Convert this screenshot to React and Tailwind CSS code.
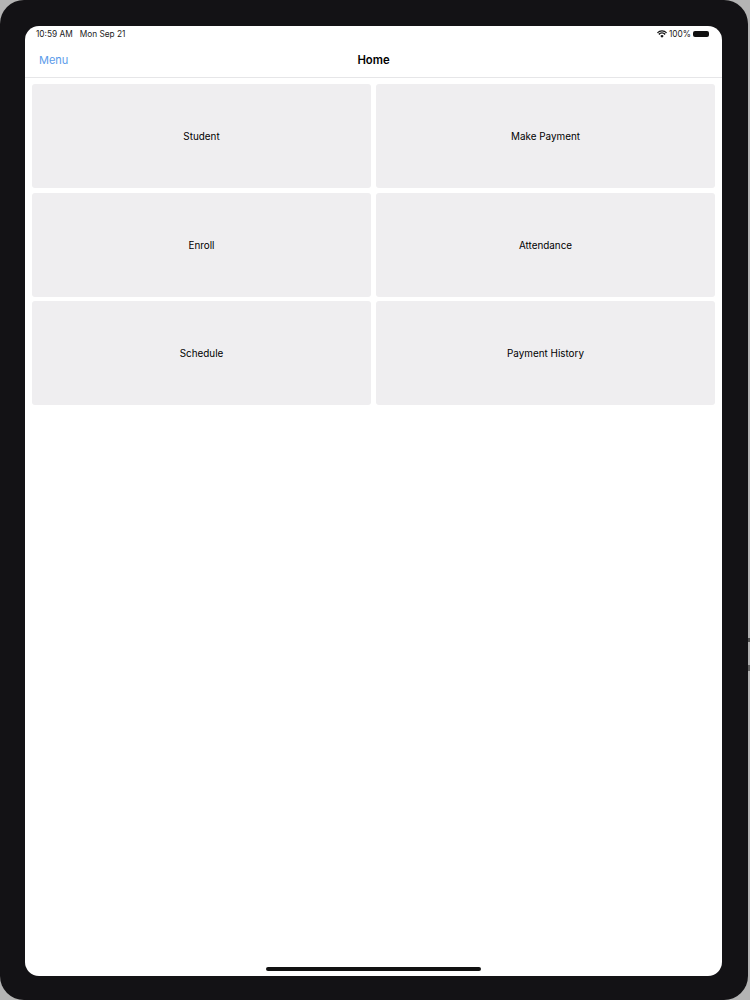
const tiles = ["Student", "Make Payment", "Enroll", "Attendance", "Schedule", "Payment History"];

const WifiIcon = () => (
  <svg className="w-[10px] h-[8px]" viewBox="0 0 20 15" fill="#111">
    <path d="M10 15 6.6 11.4a4.8 4.8 0 0 1 6.8 0L10 15ZM4.6 9.3 2.6 7.2a10.4 10.4 0 0 1 14.8 0l-2 2.1a7.6 7.6 0 0 0-10.800 0ZM1.500 6.100 0 4.400a14 14 0 0 1 20 0l-1.500 1.700a11.800 11.800 0 0 0-17 0Z" />
  </svg>
);

const Tile = ({ label }) => (
  <div className="flex items-center justify-center h-[104px] pt-[1px] bg-[#efeef0] rounded-[3px] text-[9.9px] text-black">
    {label}
  </div>
);

export default function App() {
  return (
    <div className="flex w-[750px] h-[1000px] bg-[#b4b4b4] font-['Inter',sans-serif]">
      <div className="flex w-[748px] h-full bg-[#131215] rounded-[24px] pl-[25px] pr-[26px] pt-[26px] pb-[24px]">
        <div className="flex flex-col w-full bg-white rounded-[14px] overflow-hidden">
          <div className="flex items-center justify-between h-[16px] pl-[11px] pr-[13px] text-[8.3px] text-[#222]">
            <div className="flex gap-[7px]">
              <span>10:59 AM</span>
              <span>Mon Sep 21</span>
            </div>
            <div className="flex items-center gap-[1px]">
              <WifiIcon />
              <span className="ml-[1px]">100%</span>
              <div className="w-[16px] h-[6px] ml-[1px] rounded-[2px] bg-[#111]" />
            </div>
          </div>
          <div className="flex items-center justify-between h-[36px] pt-[1px] px-[14px] border-b border-[#e6e6e8]">
            <span className="w-[60px] text-[11px] text-[#5a9bea]">Menu</span>
            <span className="text-[11.3px] font-semibold text-black">Home</span>
            <span className="w-[60px]" />
          </div>
          <div className="grid grid-cols-2 gap-x-[5px] gap-y-[4.5px] px-[7px] pt-[6px]">
            {tiles.map((label) => (
              <Tile key={label} label={label} />
            ))}
          </div>
          <div className="mt-auto mb-[5px] mx-auto w-[215px] h-[4px] rounded-full bg-[#111]" />
        </div>
      </div>
      <div className="flex flex-col w-[2px] pt-[638px]">
        <div className="h-[4px] bg-[#555555]" />
        <div className="h-[6px] mt-[23px] bg-[#666666]" />
      </div>
    </div>
  );
}
